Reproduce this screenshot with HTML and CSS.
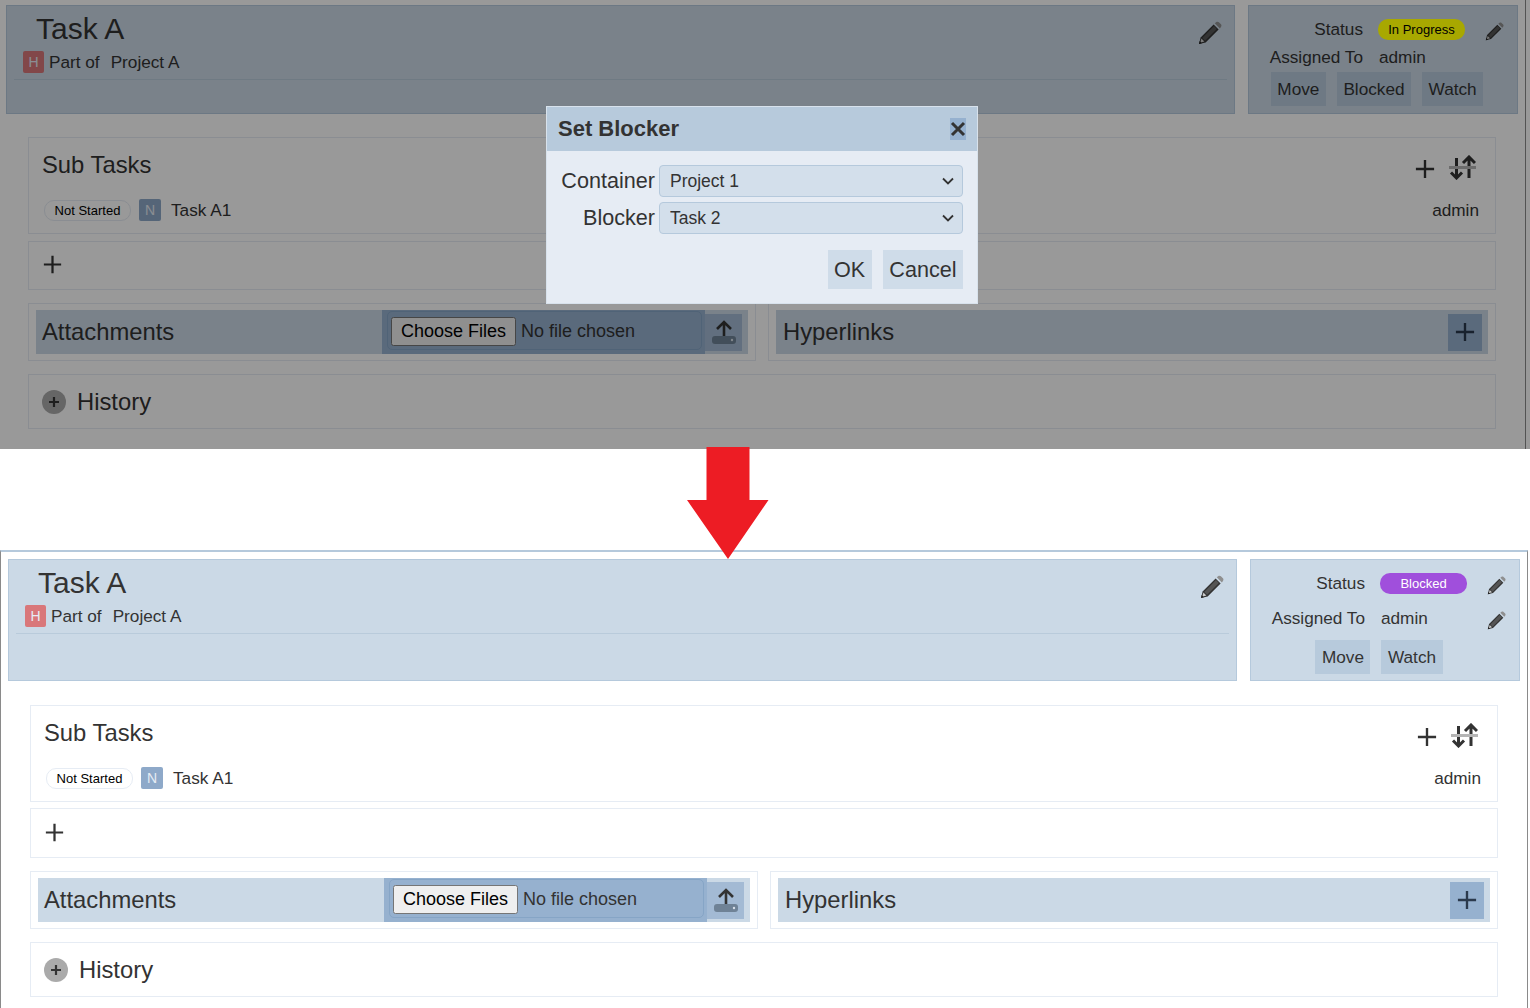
FILE: index.html
```html
<!DOCTYPE html>
<html>
<head>
<meta charset="utf-8">
<title>Set Blocker</title>
<link rel="stylesheet" href="styles.css">
</head>
<body>
<svg class="defs" width="0" height="0" aria-hidden="true">
  <symbol id="pencil" viewBox="0 0 24 24">
    <path d="M1 23l1.600-6.600L15.600 3.400l5 5L7.600 21.400z" fill="#333"/>
    <path d="M4.200 16.900L16 5.100l2.900 2.900L7.100 19.800z" fill="#555"/>
    <path d="M3.400 17.600l3 3-4.200 1.200z" fill="#ccc"/>
    <path d="M1 23l.7-2.900 2.200 2.200z" fill="#222"/>
    <path d="M16.800 2.200l1.600-1.200c.8-.5 1.800-.4 2.500.3l2 2c.7.7.7 1.700.2 2.500l-1.200 1.600z" fill="#8f8f8f"/>
  </symbol>
  <symbol id="plus" viewBox="0 0 22 22">
    <path d="M11 1v20M1 11h20" fill="none" stroke="currentColor" stroke-width="2.600"/>
  </symbol>
  <symbol id="plus-bold" viewBox="0 0 12 12">
    <path d="M6 1v10M1 6h10" fill="none" stroke="currentColor" stroke-width="2.200"/>
  </symbol>
  <symbol id="sort" viewBox="0 0 27 25">
    <path d="M7.500 3v20M2 17.500L7.500 23l5.500-5.500" fill="none" stroke="#333" stroke-width="3"/>
    <path d="M20 23V2M14 8l6-6 6 6" fill="none" stroke="#333" stroke-width="3"/>
    <path d="M0 12.500h27" stroke="#b5b5b5" stroke-width="3"/>
  </symbol>
  <symbol id="upload" viewBox="0 0 24 24">
    <path d="M12 17V2M5 9l7-7 7 7" fill="none" stroke="#333" stroke-width="2.600"/>
    <rect x="0" y="16" width="24" height="8" rx="3" fill="#6f8296"/>
    <circle cx="20" cy="20" r="1.200" fill="#d5dfe9"/>
  </symbol>
</svg>

<div class="shot shot-before">
  <div class="top-row">
    <div class="panel task-panel">
      <div class="task-head">
        <h1 class="task-title">Task A</h1>
        <svg class="pencil-large"><use href="#pencil"/></svg>
      </div>
      <div class="task-parent">
        <span class="prio prio-high">H</span>
        <span>Part of</span>
        <span class="parent-name">Project A</span>
      </div>
      <div class="task-divider"></div>
    </div>
    <div class="panel info-panel">
      <div class="info-grid">
        <span class="info-label">Status</span>
        <span class="info-value"><span class="badge badge-progress">In Progress</span></span>
        <svg class="pencil-small"><use href="#pencil"/></svg>
        <span class="info-label">Assigned To</span>
        <span class="info-value info-text">admin</span>
        <span></span>
      </div>
      <div class="info-actions">
        <button class="btn">Move</button>
        <button class="btn">Blocked</button>
        <button class="btn">Watch</button>
      </div>
    </div>
  </div>

  <div class="box subtasks">
    <div class="box-head">
      <h2 class="box-title">Sub Tasks</h2>
      <div class="box-tools">
        <svg class="icon-plus"><use href="#plus"/></svg>
        <svg class="icon-sort"><use href="#sort"/></svg>
      </div>
    </div>
    <div class="subtask">
      <span class="badge badge-plain">Not Started</span>
      <span class="prio prio-normal">N</span>
      <span class="subtask-name">Task A1</span>
      <span class="subtask-user">admin</span>
    </div>
  </div>

  <div class="box add-box"><svg class="icon-plus-small"><use href="#plus"/></svg></div>

  <div class="split">
    <div class="box strip-box">
      <div class="strip">
        <h2 class="box-title">Attachments</h2>
        <div class="file-zone">
          <div class="file-wrap"><input class="file-input" type="file" multiple></div>
        </div>
        <button class="icon-btn upload-btn"><svg class="icon-upload"><use href="#upload"/></svg></button>
      </div>
    </div>
    <div class="box strip-box">
      <div class="strip strip-links">
        <h2 class="box-title">Hyperlinks</h2>
        <button class="icon-btn link-btn"><svg class="icon-plus-btn"><use href="#plus"/></svg></button>
      </div>
    </div>
  </div>

  <div class="box history">
    <span class="expand"><svg class="icon-expand"><use href="#plus-bold"/></svg></span>
    <h2 class="box-title">History</h2>
  </div>

  <div class="dim"></div>

  <div class="dialog">
    <div class="dialog-head">
      <span class="dialog-title">Set Blocker</span>
      <span class="dialog-close">
        <svg width="16" height="16" viewBox="0 0 16 16"><path d="M2 2l12 12M14 2L2 14" stroke="#333" stroke-width="3" fill="none"/></svg>
      </span>
    </div>
    <div class="dialog-body">
      <label class="field-label">Container</label>
      <select class="field-select"><option>Project 1</option></select>
      <label class="field-label">Blocker</label>
      <select class="field-select"><option>Task 2</option></select>
    </div>
    <div class="dialog-foot">
      <button class="btn dialog-btn">OK</button>
      <button class="btn dialog-btn">Cancel</button>
    </div>
  </div>
</div>

<div class="gap">
  <svg class="arrow" width="82" height="112" viewBox="0 0 82 112"><path d="M19.500 0h43v53h19L41 112 0 53h19.500z" fill="#ed1c24"/></svg>
</div>

<div class="shot shot-after">
  <div class="top-row">
    <div class="panel task-panel">
      <div class="task-head">
        <h1 class="task-title">Task A</h1>
        <svg class="pencil-large"><use href="#pencil"/></svg>
      </div>
      <div class="task-parent">
        <span class="prio prio-high">H</span>
        <span>Part of</span>
        <span class="parent-name">Project A</span>
      </div>
      <div class="task-divider"></div>
    </div>
    <div class="panel info-panel">
      <div class="info-grid info-grid-tall">
        <span class="info-label">Status</span>
        <span class="info-value"><span class="badge badge-blocked">Blocked</span></span>
        <svg class="pencil-small"><use href="#pencil"/></svg>
        <span class="info-label">Assigned To</span>
        <span class="info-value info-text">admin</span>
        <svg class="pencil-small"><use href="#pencil"/></svg>
      </div>
      <div class="info-actions">
        <button class="btn">Move</button>
        <button class="btn">Watch</button>
      </div>
    </div>
  </div>

  <div class="box subtasks">
    <div class="box-head">
      <h2 class="box-title">Sub Tasks</h2>
      <div class="box-tools">
        <svg class="icon-plus"><use href="#plus"/></svg>
        <svg class="icon-sort"><use href="#sort"/></svg>
      </div>
    </div>
    <div class="subtask">
      <span class="badge badge-plain">Not Started</span>
      <span class="prio prio-normal">N</span>
      <span class="subtask-name">Task A1</span>
      <span class="subtask-user">admin</span>
    </div>
  </div>

  <div class="box add-box"><svg class="icon-plus-small"><use href="#plus"/></svg></div>

  <div class="split">
    <div class="box strip-box">
      <div class="strip">
        <h2 class="box-title">Attachments</h2>
        <div class="file-zone">
          <div class="file-wrap"><input class="file-input" type="file" multiple></div>
        </div>
        <button class="icon-btn upload-btn"><svg class="icon-upload"><use href="#upload"/></svg></button>
      </div>
    </div>
    <div class="box strip-box">
      <div class="strip strip-links">
        <h2 class="box-title">Hyperlinks</h2>
        <button class="icon-btn link-btn"><svg class="icon-plus-btn"><use href="#plus"/></svg></button>
      </div>
    </div>
  </div>

  <div class="box history">
    <span class="expand"><svg class="icon-expand"><use href="#plus-bold"/></svg></span>
    <h2 class="box-title">History</h2>
  </div>
</div>
</body>
</html>
```

FILE: styles.css
```css
html, body {
  margin: 0;
  padding: 0;
  background: #fff;
  overflow: hidden;
}

body {
  height: 1008px;
  font-family: "Liberation Sans", Arial, sans-serif;
  color: #333;
}

.defs {
  position: absolute;
}

h1, h2 {
  margin: 0;
  font-weight: normal;
}

button {
  font-family: inherit;
  color: inherit;
  border: 0;
  padding: 0;
  margin: 0;
}

.shot {
  position: relative;
  box-sizing: border-box;
  overflow: hidden;
  background: #fff;
}

.shot-before {
  width: 1530px;
  height: 449px;
  padding: 5px 0 0 6px;
  background: linear-gradient(#8a8a8a, #8a8a8a) no-repeat 1525px 0 / 1px 100%, #fff;
}

.shot-after {
  width: 1528px;
  height: 458px;
  padding: 7px 0 0 7px;
  border-top: 2px solid #b5c9dc;
  border-left: 1px solid #8a8a8a;
  border-right: 1px solid #8a8a8a;
}

.gap {
  position: relative;
  z-index: 5;
  height: 101px;
}

.arrow {
  position: absolute;
  left: 687px;
  top: -2px;
}

.dim {
  position: absolute;
  left: 0;
  top: 0;
  right: 0;
  bottom: 0;
  z-index: 1;
  background: rgba(0, 0, 0, 0.4);
}

/* top row */
.top-row {
  display: grid;
  grid-template-columns: 1229px 270px;
  column-gap: 13px;
}

.panel {
  box-sizing: border-box;
  background: #cbd9e6;
  border: 1px solid #b5c9dc;
}

.task-panel {
  padding: 0 7px;
}

.task-head {
  display: flex;
  justify-content: space-between;
  align-items: flex-start;
  height: 45px;
  padding: 6px 0 0 22px;
  box-sizing: border-box;
}

.task-title {
  font-size: 30px;
  line-height: 34px;
}

.pencil-large {
  width: 24px;
  height: 24px;
  margin: 9px 5px 0 0;
}

.task-parent {
  display: flex;
  align-items: flex-end;
  height: 22px;
  padding-left: 9px;
  font-size: 17.2px;
}

.parent-name {
  margin-left: 11px;
}

.task-divider {
  margin-top: 6px;
  border-top: 1px solid #b9cbdb;
}

.prio {
  box-sizing: border-box;
  display: flex;
  align-items: center;
  justify-content: center;
  width: 22px;
  height: 22px;
  border-radius: 2px;
  font-size: 14px;
  color: #e6ecf4;
}

.prio-high {
  width: 21px;
  margin-right: 5px;
  background: #d9777a;
}

.prio-normal {
  background: #8ea9c9;
}

.info-panel {
  padding: 10px 12px 6px 0;
}

.shot-before .info-panel {
  padding-bottom: 7px;
}

.info-grid {
  display: grid;
  grid-template-columns: 114px 122px 1fr;
  grid-template-rows: 28px 28px;
  align-items: center;
  font-size: 17.2px;
}

.info-grid-tall {
  grid-template-rows: 28px 42px;
}

.info-label {
  padding-bottom: 2px;
  text-align: right;
}

.info-value {
  padding-bottom: 2px;
  padding-left: 15px;
  white-space: nowrap;
}

.info-text {
  padding-left: 16px;
}

.pencil-small {
  width: 19px;
  height: 19px;
  margin-top: 3px;
}

.badge {
  box-sizing: border-box;
  display: inline-block;
  width: 87px;
  height: 21px;
  line-height: 19px;
  border-radius: 10px;
  font-size: 13px;
  text-align: center;
  vertical-align: middle;
  border: 1px solid transparent;
}

.badge-progress {
  position: relative;
  z-index: 2;
  background: #a8a800;
  color: #000;
}

.badge-blocked {
  background: #a04fdc;
  color: #fff;
}

.badge-plain {
  background: #fff;
  color: #000;
  border-color: #e6ecf4;
}

.info-actions {
  display: flex;
  justify-content: center;
  gap: 11px;
}

.btn {
  height: 34px;
  padding: 0 6.5px;
  background: #b7cadc;
  font-size: 17.2px;
}

/* boxes */
.box {
  box-sizing: border-box;
  width: 1468px;
  margin: 0 0 0 22px;
  background: #fff;
  border: 1px solid #e6ecf4;
}

.subtasks {
  height: 97px;
  margin-top: 24px;
  padding: 0 13px;
}

.shot-before .subtasks {
  margin-top: 23px;
}

.box-head {
  display: flex;
  justify-content: space-between;
  align-items: flex-start;
  height: 60px;
  padding-top: 10px;
  box-sizing: border-box;
}

.box-title {
  font-size: 23.8px;
  line-height: 34px;
}

.box-tools {
  display: flex;
  gap: 14px;
  margin: 7px 6px 0 0;
}

.icon-plus {
  width: 20px;
  height: 20px;
  margin-top: 4px;
  color: #333;
}

.icon-sort {
  width: 27px;
  height: 25px;
}

.subtask {
  display: flex;
  align-items: center;
  height: 24px;
  padding-left: 2px;
  font-size: 17.2px;
}

.subtask .prio {
  margin-left: 8px;
}

.subtask-name {
  margin-left: 10px;
}

.subtask-user {
  margin-left: auto;
  margin-right: 3px;
}

.add-box {
  display: flex;
  align-items: center;
  height: 50px;
  margin-top: 6px;
  padding-left: 14px;
}

.shot-before .add-box {
  height: 49px;
  margin-top: 7px;
}

.icon-plus-small {
  width: 19px;
  height: 19px;
  margin-bottom: 2px;
  color: #333;
}

.split {
  display: grid;
  grid-template-columns: 728px 728px;
  column-gap: 12px;
  margin: 13px 0 0 22px;
}

.strip-box {
  width: auto;
  height: 58px;
  margin: 0;
  padding: 6px 7px;
}

.strip {
  display: flex;
  align-items: center;
  height: 44px;
  padding-left: 6px;
  background: #cbd9e6;
}

.strip .box-title {
  width: 340px;
  flex: none;
}

.file-zone {
  box-sizing: border-box;
  width: 323px;
  height: 44px;
  padding: 1px 3px 1px 5px;
  background: #96b1cf;
}

.file-wrap {
  box-sizing: border-box;
  height: 39px;
  padding: 5px 0 0 3px;
  border: 1px solid #86a5c6;
  border-radius: 5px;
}

.file-input {
  width: 300px;
  font-family: "Liberation Sans", Arial, sans-serif;
  font-size: 18px;
  color: #333;
}

.file-input::file-selector-button {
  padding: 2px 8px;
  margin-right: 5px;
}

.icon-btn {
  display: flex;
  align-items: center;
  justify-content: center;
  height: 37px;
}

.upload-btn {
  width: 37px;
  background: #a3bad4;
}

.icon-upload {
  width: 24px;
  height: 24px;
}

.strip-links {
  justify-content: space-between;
  padding: 0 6px 0 7px;
}

.link-btn {
  width: 34px;
  background: #96b1cf;
}

.icon-plus-btn {
  width: 20px;
  height: 20px;
  color: #2b3a4d;
}

.history {
  display: flex;
  align-items: center;
  height: 55px;
  margin-top: 13px;
  padding-left: 13px;
}

.history .box-title {
  margin-left: 11px;
}

.expand {
  display: flex;
  align-items: center;
  justify-content: center;
  width: 24px;
  height: 24px;
  border-radius: 50%;
  background: #aaa;
}

.icon-expand {
  width: 12px;
  height: 12px;
  color: #333;
}

/* dialog */
.dialog {
  position: absolute;
  left: 546px;
  top: 106px;
  z-index: 3;
  box-sizing: border-box;
  width: 432px;
  height: 198px;
  background: #e6ecf4;
  border: 1px solid #d8e2ec;
}

.dialog-head {
  display: flex;
  justify-content: space-between;
  align-items: center;
  height: 44px;
  padding: 0 11px;
  background: #b7cadc;
}

.dialog-title {
  font-size: 22px;
  font-weight: bold;
}

.dialog-close {
  display: flex;
  align-items: center;
  justify-content: center;
  width: 16px;
  height: 22px;
  background: #96b1cf;
}

.dialog-body {
  display: grid;
  grid-template-columns: 108px 304px;
  grid-template-rows: 32px 32px;
  column-gap: 4px;
  row-gap: 5px;
  align-items: center;
  padding-top: 14px;
}

.field-label {
  font-size: 21.6px;
  text-align: right;
}

.field-select {
  appearance: none;
  height: 100%;
  box-sizing: border-box;
  padding-left: 10px;
  background: #d3dfeb url("data:image/svg+xml,%3Csvg xmlns='http://www.w3.org/2000/svg' width='12' height='8' viewBox='0 0 12 8'%3E%3Cpath d='M1 1.500l5 5 5-5' fill='none' stroke='%23333' stroke-width='1.800'/%3E%3C/svg%3E") no-repeat right 8px center;
  border: 1px solid #b5c9dc;
  border-radius: 4px;
  color: #333;
  font-family: "Liberation Sans", Arial, sans-serif;
  font-size: 17.5px;
}

.dialog-foot {
  display: flex;
  justify-content: flex-end;
  gap: 11px;
  padding: 16px 14px 0 0;
}

.dialog-btn {
  height: 39px;
  padding: 0 6.5px;
  background: #cfdce9;
  font-size: 21.6px;
}
```
